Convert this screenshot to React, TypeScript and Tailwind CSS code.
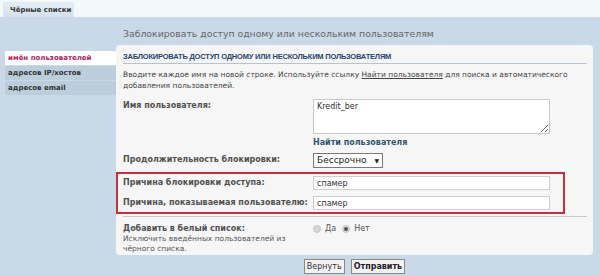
import { useState } from 'react';

const font = { fontFamily: '"DejaVu Sans", Verdana, sans-serif' };

function SideMenu() {
    const items = ["имён пользователей", "адресов IP/хостов", "адресов email"];
    return (<div className="w-[111px] ml-[5px] mt-[34px] flex flex-col gap-px">
        {items.map((item, i) => (
            <div key={item} className={i === 0
                ? "h-[14px] pl-[3px] bg-white text-[#b2215e] text-[7px] font-bold leading-[14px]"
                : "h-[14px] pl-[3px] bg-[#bccddb] text-[#333] text-[7px] font-bold leading-[14px]"}>{item}</div>
        ))}
    </div>)
}

function Row({ label, children, className }: { label: string, children: React.ReactNode, className?: string }) {
    return (<div className={"flex items-start " + (className || "")}>
        <div className="w-[190px] shrink-0 text-[8px] font-bold text-[#505050] leading-[14px]">{label}</div>
        <div className="flex-1">{children}</div>
    </div>)
}

export default function App() {
    const [white, setWhite] = useState(false);
    return (<div style={font} className="w-[600px] h-[276px] bg-[#c9d9e8] overflow-hidden">
        <div className="h-[17px] bg-[#f3f8fb] pl-[3px] pt-[2px]">
            <div className="w-[71px] h-[15px] rounded-t-[3px] bg-gradient-to-b from-[#e6eff5] to-[#d3e0eb] border border-b-0 border-[#dfe8ef] text-[7px] font-bold text-[#333] leading-[14px] pl-[6px]">Чёрные списки</div>
        </div>
        <div className="flex">
            <SideMenu />
            <div className="w-[477px]">
                <div className="h-[28px] pl-[7px] pt-[11px] text-[9.3px] text-[#666] leading-[12px]">Заблокировать доступ одному или нескольким пользователям</div>
                <div className="h-[210px] bg-[#f6f6f6] rounded-[4px] pt-[7px] pb-[4px]">
                    <div className="ml-[7px] mr-[6px] border-b border-[#b7c4d0] pb-[1px] text-[7.5px] font-bold text-[#24466e] leading-[10px] tracking-[-0.2px]" style={{ fontFamily: '"Liberation Sans", Arial, sans-serif' }}>ЗАБЛОКИРОВАТЬ ДОСТУП ОДНОМУ ИЛИ НЕСКОЛЬКИМ ПОЛЬЗОВАТЕЛЯМ</div>
                    <p className="ml-[7px] mt-[5px] mr-[20px] text-[7.5px] text-[#444] leading-[11px]">Вводите каждое имя на новой строке. Используйте ссылку <span className="underline">Найти пользователя</span> для поиска и автоматического добавления пользователей.</p>
                    <Row label="Имя пользователя:" className="ml-[7px] mt-[8px]">
                        <textarea defaultValue="Kredit_ber" className="block w-[237px] h-[35px] bg-white border border-[#c8c8c8] text-[8px] text-[#333] px-[3px] py-[2px] leading-[10px] outline-none" style={font} />
                        <div className="mt-[4px] text-[8px] font-bold text-[#2d5670] leading-[10px]">Найти пользователя</div>
                    </Row>
                    <Row label="Продолжительность блокировки:" className="ml-[7px] mt-[5px]">
                        <div className="w-[70px] h-[15px] bg-white border border-[#7a7a7a] flex items-center justify-between px-[3px] text-[9px] text-[#222]">
                            <span>Бессрочно</span><span className="text-[6px]">▼</span>
                        </div>
                    </Row>
                    <div className="mt-[4px] w-[449px] h-[42px] border-2 border-[#c9303b] flex flex-col justify-center gap-[6px] pl-[5px]">
                        <Row label="Причина блокировки доступа:">
                            <input defaultValue="спамер" className="block w-[237px] h-[14px] bg-white border border-[#cfcfcf] text-[8px] text-[#333] px-[3px] outline-none" style={font} />
                        </Row>
                        <Row label="Причина, показываемая пользователю:">
                            <input defaultValue="спамер" className="block w-[237px] h-[14px] bg-white border border-[#cfcfcf] text-[8px] text-[#333] px-[3px] outline-none" style={font} />
                        </Row>
                    </div>
                    <div className="ml-[7px] mr-[6px] mt-[2px] border-t border-[#c8c8c8]" />
                    <div className="ml-[7px] mt-[6px] flex items-start">
                        <div className="w-[190px] shrink-0">
                            <div className="text-[8px] font-bold text-[#505050] leading-[11px]">Добавить в белый список:</div>
                            <div className="text-[7.5px] text-[#555] leading-[10px]">Исключить введённых пользователей из чёрного списка.</div>
                        </div>
                        <div className="flex items-center gap-[6px] text-[8px] text-[#555] leading-[11px]">
                            <label className="flex items-center gap-[4px]" onClick={() => setWhite(true)}>
                                <span className="w-[8px] h-[8px] rounded-full bg-[#d8d8d8] border border-[#c4c4c4] flex items-center justify-center">
                                    {white && <span className="w-[3px] h-[3px] rounded-full bg-[#555]" />}
                                </span>Да</label>
                            <label className="flex items-center gap-[4px]" onClick={() => setWhite(false)}>
                                <span className="w-[8px] h-[8px] rounded-full bg-[#d8d8d8] border border-[#c4c4c4] flex items-center justify-center">
                                    {!white && <span className="w-[4px] h-[4px] rounded-full bg-[#555]" />}
                                </span>Нет</label>
                        </div>
                    </div>
                </div>
                <div className="flex justify-center gap-[6px] mt-[4px]">
                    <button className="h-[15px] px-[2px] bg-[#f2f2f2] border border-[#8a8a8a] text-[8px] text-[#333] leading-[13px]">Вернуть</button>
                    <button className="h-[15px] px-[2px] bg-[#f2f2f2] border border-[#8a8a8a] text-[8px] font-bold text-[#222] leading-[13px]">Отправить</button>
                </div>
            </div>
        </div>
    </div>)
}
